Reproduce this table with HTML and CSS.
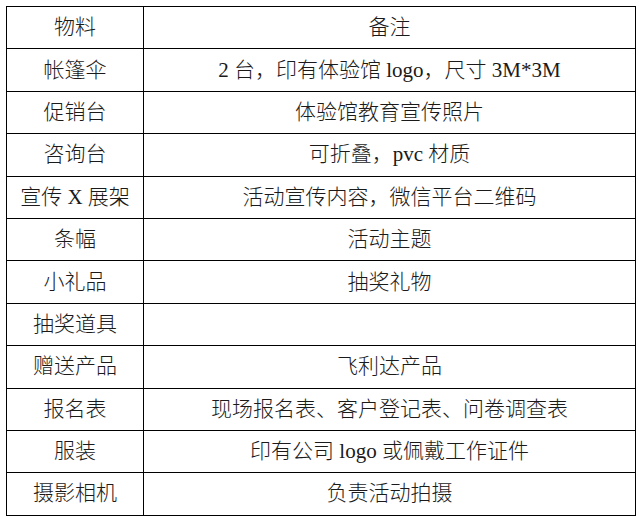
FILE: index.html
```html
<!DOCTYPE html>
<html lang="zh">
<head>
<meta charset="utf-8">
<title>物料清单</title>
<link rel="stylesheet" href="styles.css">
</head>
<body>
<table class="list">
  <colgroup><col class="c1"><col class="c2"></colgroup>
  <tbody>
    <tr><td>物料</td><td>备注</td></tr>
    <tr><td>帐篷伞</td><td>2 台，印有体验馆 logo，尺寸 3M*3M</td></tr>
    <tr><td>促销台</td><td>体验馆教育宣传照片</td></tr>
    <tr><td>咨询台</td><td>可折叠，pvc 材质</td></tr>
    <tr><td>宣传 X 展架</td><td>活动宣传内容，微信平台二维码</td></tr>
    <tr><td>条幅</td><td>活动主题</td></tr>
    <tr><td>小礼品</td><td>抽奖礼物</td></tr>
    <tr><td>抽奖道具</td><td></td></tr>
    <tr><td>赠送产品</td><td>飞利达产品</td></tr>
    <tr><td>报名表</td><td>现场报名表、客户登记表、问卷调查表</td></tr>
    <tr><td>服装</td><td>印有公司 logo 或佩戴工作证件</td></tr>
    <tr><td>摄影相机</td><td>负责活动拍摄</td></tr>
  </tbody>
</table>
</body>
</html>
```

FILE: styles.css
```css
html, body {
  margin: 0;
  padding: 0;
  background: #fff;
}
body {
  padding: 6px 0 0 6px;
}
.list {
  border-collapse: collapse;
  table-layout: fixed;
  width: 630px;
  height: 509px;
  font-family: "Liberation Serif", "Noto Sans CJK SC", serif;
  font-size: 21px;
  font-weight: 300;
  color: #1a1a1a;
}
.c1 { width: 137px; }
.list tr { height: 42.4px; }
.list td {
  border: 1px solid #000;
  padding: 0;
  text-align: center;
  vertical-align: middle;
  line-height: 1;
  white-space: nowrap;
}
```
